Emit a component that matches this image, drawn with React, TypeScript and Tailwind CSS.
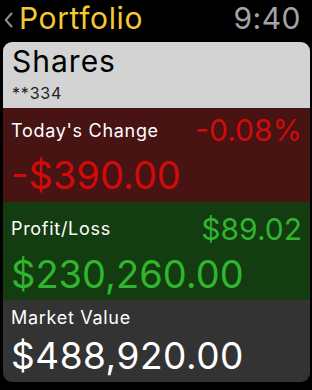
const font = { fontFamily: "Inter, 'Noto Sans', sans-serif" };

export default function App() {
  return (
    <div className="h-[390px] w-[312px] overflow-hidden bg-black text-white" style={font}>
      {/* top bar */}
      <div className="flex h-[42px] items-start justify-between">
        <div className="flex items-start">
          <svg className="ml-[4px] mt-[12px]" width="9" height="16" viewBox="0 0 9 16" fill="none">
            <polyline points="7.5,1.5 1.8,8 7.5,14.5" stroke="#8e8e93" strokeWidth="2" strokeLinecap="round" strokeLinejoin="round" />
          </svg>
          <span className="ml-[6px] mt-[3px] text-[30px] leading-none tracking-[0.6px] text-[#f4c934]">Portfolio</span>
        </div>
        <span className="mr-[11px] mt-[3px] text-[30px] leading-none tracking-[0.5px] text-[#a3a3a8]">9:40</span>
      </div>

      <div className="ml-[3px] mr-[2px] overflow-hidden rounded-[9px]">
        {/* account */}
        <div className="h-[66px] bg-[#d3d3d3] px-[9px] pt-[4px] text-black">
          <div className="text-[30px] leading-none tracking-[1px]">Shares</div>
          <div className="mt-[9px] text-[16px] leading-none tracking-[0.8px] text-[#222]">**334</div>
        </div>

        {/* today's change */}
        <div className="h-[94px] bg-[#471313] px-[8px] pt-[7px]">
          <div className="flex items-start justify-between">
            <span className="mt-[7px] text-[18px] leading-none tracking-[0.7px]">Today's Change</span>
            <span className="text-[30px] leading-none text-[#d20a0a]">-0.08%</span>
          </div>
          <div className="mt-[11px] text-[38px] leading-none text-[#d20a0a]">-$390.00</div>
        </div>

        {/* profit / loss */}
        <div className="h-[98px] bg-[#133c10] px-[8px] pt-[12px]">
          <div className="flex items-start justify-between">
            <span className="mt-[6px] text-[18px] leading-none tracking-[0.7px]">Profit/Loss</span>
            <span className="text-[30px] leading-none text-[#2fb52f]">$89.02</span>
          </div>
          <div className="mt-[11px] text-[38px] leading-none text-[#2fb52f]">$230,260.00</div>
        </div>

        {/* market value */}
        <div className="h-[82px] bg-[#333333] px-[8px] pt-[9px]">
          <div className="text-[18px] leading-none tracking-[0.7px]">Market Value</div>
          <div className="mt-[10px] text-[37px] leading-none tracking-[0.5px]">$488,920.00</div>
        </div>
      </div>
    </div>
  );
}
